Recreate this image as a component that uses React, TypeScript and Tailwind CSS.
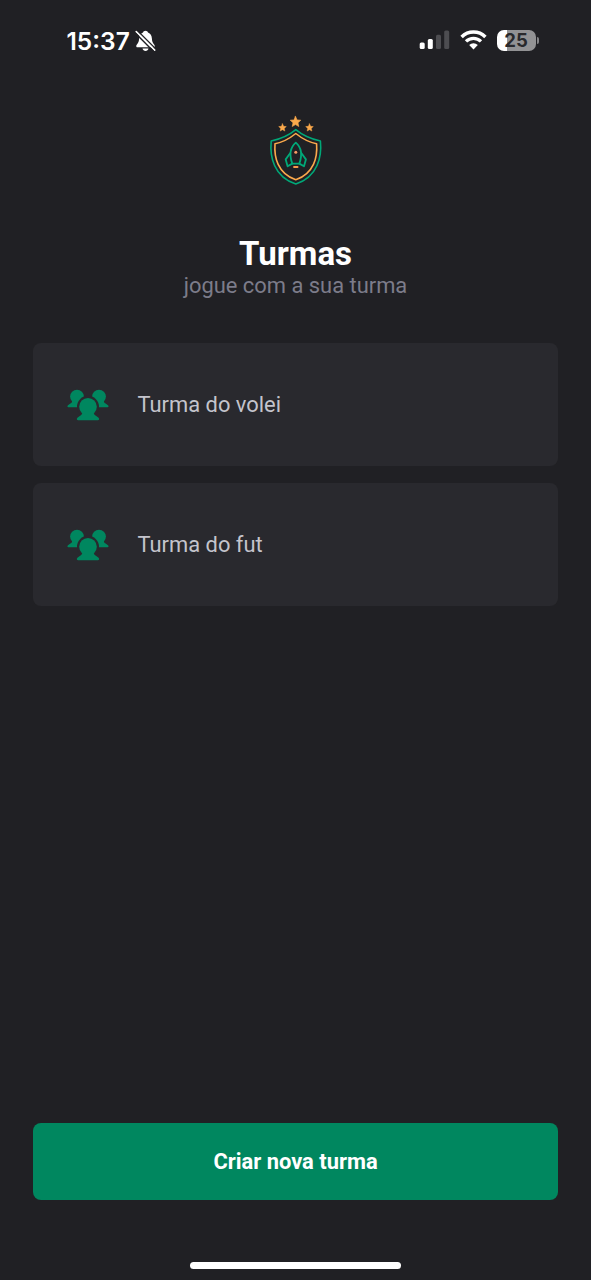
function BellOff() {
  return (
    <svg width="22" height="24" viewBox="0 0 22 24" fill="none">
      <path
        d="M10.500 1.800c-1.200 0-2.200.7-2.500 1.800C5.500 4.500 4.200 6.700 4.100 9.500c-.1 3.200-.8 4.400-2.200 5.900-1.200 1.300-.7 2.900.8 2.900h15.600c1.500 0 2-1.600.8-2.900-1.400-1.500-2.100-2.700-2.200-5.900-.1-2.800-1.400-5-3.900-5.900-.3-1.100-1.300-1.800-2.500-1.800z"
        fill="#fff"
      />
      <path d="M7.500 19.600h6c-.3 1.600-1.500 2.500-3 2.500s-2.700-.9-3-2.500z" fill="#fff" />
      <path d="M2 1.200L21 20.200" stroke="#202024" strokeWidth="1.500" />
      <path d="M1.200 2.600L19.700 21.100" stroke="#fff" strokeWidth="1.600" strokeLinecap="round" />
      <path d="M0 3.800L18.600 22.400" stroke="#202024" strokeWidth="1.400" />
    </svg>
  );
}

function Signal() {
  return (
    <svg width="31" height="20" viewBox="0 0 31 20">
      <rect x="0.7" y="12.500" width="5" height="6.500" rx="1.500" fill="#fff" />
      <rect x="8.800" y="9" width="5" height="10" rx="1.500" fill="#fff" />
      <rect x="17" y="4.700" width="5" height="14.300" rx="1.500" fill="#4d4d51" />
      <rect x="25.200" y="0.500" width="5" height="18.500" rx="1.500" fill="#4d4d51" />
    </svg>
  );
}

function Wifi() {
  return (
    <svg width="27" height="20" viewBox="0 0 27 20" fill="none">
      <path d="M1.600 6.900a17 17 0 0 1 23.800 0" stroke="#fff" strokeWidth="3.500" />
      <path d="M6 11.400a10.700 10.700 0 0 1 15 0" stroke="#fff" strokeWidth="3.300" />
      <path d="M13.500 19.400l-4.300-4.300a6.200 6.200 0 0 1 8.600 0z" fill="#fff" strokeLinejoin="round" />
    </svg>
  );
}

function Battery() {
  return (
    <div className="flex items-center gap-[1px]">
      <div className="flex h-[21px] w-[39px] items-center justify-center rounded-[7px] bg-linear-to-r from-white from-25% to-[#929294] to-25% font-['Inter',sans-serif] text-[18.500px] leading-none font-bold text-[#29292c]">
        25
      </div>
      <div className="h-[7px] w-[2px] rounded-r-full bg-[#858588]" />
    </div>
  );
}

const star = "M0-5.500L1.600-1.900L5.300-1.600L2.500 1L3.300 4.700L0 2.800L-3.300 4.700L-2.500 1L-5.300-1.600L-1.600-1.900Z";

function Crest() {
  return (
    <svg width="56" height="72" viewBox="0 0 56 72" fill="none" strokeLinejoin="round" strokeLinecap="round">
      <g fill="#fba94c" stroke="#fba94c" strokeWidth=".6">
        <path d={star} transform="translate(27.500 7.800)" />
        <path d={star} transform="translate(14.500 13.700) scale(.72)" />
        <path d={star} transform="translate(41.500 13.700) scale(.72)" />
      </g>
      <path
        d="M27.800 15.700C21.500 21 12 25.200 3.200 27C1.700 42 5.500 63 27.800 70C50.100 63 53.900 42 52.400 27C43.600 25.200 34.100 21 27.800 15.700Z"
        stroke="#00a878"
        strokeWidth="1.600"
      />
      <path
        d="M27.800 19.500C21.500 24.600 14.500 28.300 7 29.700C6 43 9.500 59.500 27.800 65.800C46.100 59.500 49.600 43 48.600 29.700C41.100 28.300 34.100 24.600 27.800 19.500Z"
        stroke="#fba94c"
        strokeWidth="1.600"
      />
      <g stroke="#00a878" strokeWidth="1.800">
        <path d="M24.300 49.600C21.300 41.500 22.200 33.500 27.800 28.600C33.400 33.500 34.300 41.500 31.300 49.600Z" />
        <path d="M22.300 39L17.700 45.400L19.600 52.300L24.300 49.600M33.300 39L37.900 45.400L36 52.300L31.300 49.600" />
      </g>
      <circle cx="27.800" cy="38.200" r="1.500" fill="#f79a65" />
      <path d="M26 53h3.600" stroke="#f79a4c" strokeWidth="1.800" />
    </svg>
  );
}

function People() {
  return (
    <svg width="44" height="44" viewBox="0 0 44 44">
      <g fill="#00875f">
        <path d="M6 18.500c.4 1.500-.2 2.200-1.600 3.100L2 23.300c-1 .8-.7 2 .5 2H14V16z" />
        <path d="M38 18.500c-.4 1.500.2 2.200 1.600 3.100L42 23.300c1 .8.7 2-.5 2H30V16z" />
        <circle cx="11" cy="14.600" r="6.900" />
        <circle cx="33" cy="14.600" r="6.900" />
      </g>
      <circle cx="22" cy="24.700" r="11" fill="#29292e" />
      <circle cx="22" cy="24.700" r="8.800" fill="#00875f" />
      <path
        d="M16.200 29.500c.4 2-.2 2.900-1.700 3.900L11.700 35.500c-1.500 1.200-1.100 2.700.6 2.700h19.400c1.700 0 2.100-1.500.6-2.700l-2.800-2.100c-1.500-1-2.100-1.900-1.700-3.900z"
        fill="#00875f"
      />
    </svg>
  );
}

function GroupCard({ name }: { name: string }) {
  return (
    <button className="flex h-[123.500px] w-full items-center rounded-[8px] bg-[#29292e] px-[33px] text-left text-[21.900px] text-[#c4c4cc]">
      <People />
      <span className="ml-[27.500px] pt-[2px]">{name}</span>
    </button>
  );
}

export default function App() {
  return (
    <div className="flex h-[1280px] w-full flex-col bg-[#202024] font-['Roboto',sans-serif]">
      <header className="flex h-[80px] items-center justify-between pr-[52.500px] pl-[66.500px]">
        <div className="flex items-center gap-[5px] pt-[1px] font-['Inter',sans-serif] text-[24.500px] leading-[30px] font-semibold text-white">
          <span>15:37</span>
          <BellOff />
        </div>
        <div className="flex items-center gap-[10px]">
          <Signal />
          <Wifi />
          <Battery />
        </div>
      </header>
      <main className="flex flex-1 flex-col px-[33px] pt-[34px]">
        <div className="flex justify-center">
          <Crest />
        </div>
        <div className="mt-[48px] text-center">
          <h1 className="text-[33px] leading-[39px] font-bold text-white">Turmas</h1>
          <p className="text-[21.900px] leading-[26px] text-[#7c7c8a]">jogue com a sua turma</p>
        </div>
        <div className="mt-[43.500px] flex flex-col gap-[16.500px]">
          <GroupCard name="Turma do volei" />
          <GroupCard name="Turma do fut" />
        </div>
        <button className="mt-auto h-[77px] rounded-[8px] bg-[#00875f] pt-[2px] text-[21.900px] font-bold text-white">
          Criar nova turma
        </button>
      </main>
      <footer className="flex h-[80px] items-end justify-center pb-[11px]">
        <div className="h-[7px] w-[211px] rounded-full bg-white" />
      </footer>
    </div>
  );
}
